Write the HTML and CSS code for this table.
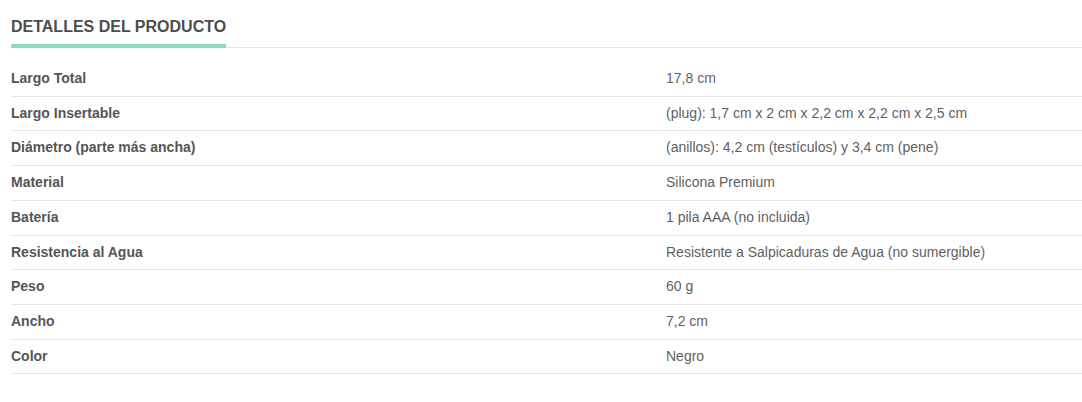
FILE: index.html
```html
<!DOCTYPE html>
<html lang="es">
<head>
<meta charset="utf-8">
<title>Detalles del producto</title>
<link rel="stylesheet" href="styles.css">
</head>
<body>
<section class="details">
  <div class="tabs">
    <h2 class="tab-title">DETALLES DEL PRODUCTO</h2>
  </div>
  <div class="specs">
    <div class="row"><div class="label">Largo Total</div><div class="value">17,8 cm</div></div>
    <div class="row"><div class="label">Largo Insertable</div><div class="value">(plug): 1,7 cm x 2 cm x 2,2 cm x 2,2 cm x 2,5 cm</div></div>
    <div class="row"><div class="label">Diámetro (parte más ancha)</div><div class="value">(anillos): 4,2 cm (testículos) y 3,4 cm (pene)</div></div>
    <div class="row"><div class="label">Material</div><div class="value">Silicona Premium</div></div>
    <div class="row"><div class="label">Batería</div><div class="value">1 pila AAA (no incluida)</div></div>
    <div class="row"><div class="label">Resistencia al Agua</div><div class="value">Resistente a Salpicaduras de Agua (no sumergible)</div></div>
    <div class="row"><div class="label">Peso</div><div class="value">60 g</div></div>
    <div class="row"><div class="label">Ancho</div><div class="value">7,2 cm</div></div>
    <div class="row"><div class="label">Color</div><div class="value">Negro</div></div>
  </div>
</section>
</body>
</html>
```
FILE: styles.css
```css
html, body {
  margin: 0;
  padding: 0;
  background: #ffffff;
}
body {
  font-family: "Liberation Sans", Arial, sans-serif;
  padding: 17px 0 0 11px;
}
.tabs {
  display: flex;
  border-bottom: 1px solid #e6e6e6;
  margin-bottom: 14px;
}
.tab-title {
  margin: 0 0 -1px 0;
  font-size: 16px;
  line-height: 20px;
  font-weight: bold;
  color: #4d4d4d;
  padding-bottom: 7px;
  border-bottom: 4px solid #8ed9c8;
}
.specs {
  display: flex;
  flex-direction: column;
}
.row {
  display: grid;
  grid-template-columns: 655px 1fr;
  border-bottom: 1px solid #e6e6e6;
  font-size: 14px;
  line-height: 17.7px;
  padding: 8px 0;
}
.label {
  font-weight: bold;
  color: #555555;
}
.value {
  color: #5f5f5f;
}
```
